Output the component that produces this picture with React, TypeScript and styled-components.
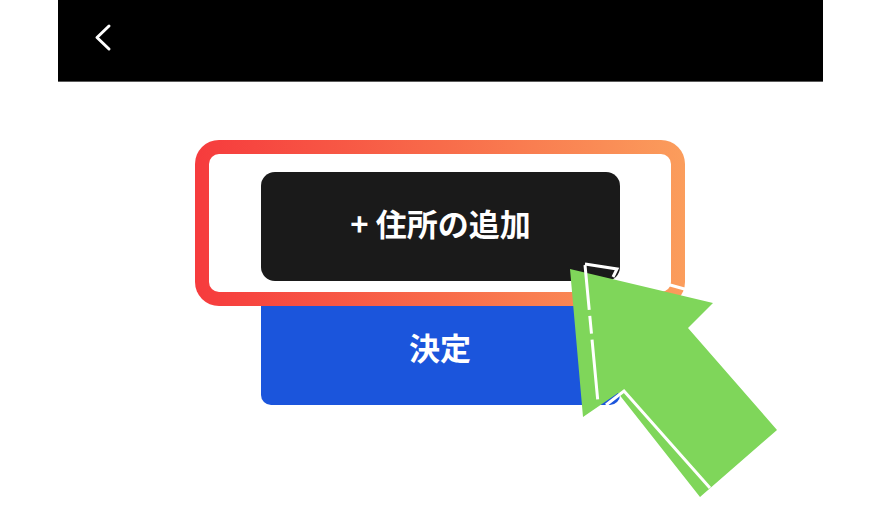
import styled, { createGlobalStyle } from "styled-components";

const GlobalStyle = createGlobalStyle`
  html, body {
    margin: 0;
    padding: 0;
    background: #ffffff;
    font-family: "Noto Sans CJK JP", "Noto Sans", sans-serif;
  }
`;

export default function App() {
  return (
    <Page>
      <GlobalStyle />
      <Screen>
        <Header>
          <BackButton aria-label="back">
            <svg width="20" height="30" viewBox="0 0 20 30">
              <polyline
                points="15,3 3,14.5 15,26"
                fill="none"
                stroke="#ffffff"
                strokeWidth="3"
                strokeLinecap="round"
                strokeLinejoin="round"
              />
            </svg>
          </BackButton>
        </Header>
        <Content>
          <Highlight>
            <ActionButton $tone="dark">+ 住所の追加</ActionButton>
          </Highlight>
          <ActionButton $tone="blue" $under>
            決定
          </ActionButton>
        </Content>
      </Screen>
      <Pointer width="880" height="523" viewBox="0 0 880 523">
        <polygon
          points="570,269 713,303 688,328 777,430 700,497 618,393 583,417"
          fill="#7fd65a"
        />
        <polyline
          points="585,265 598,403"
          fill="none"
          stroke="#ffffff"
          strokeWidth="3"
          strokeDasharray="45 6 18 6 60"
        />
        <polyline
          points="585,264 617,269 613,277"
          fill="none"
          stroke="#ffffff"
          strokeWidth="3"
        />
        <line x1="620" y1="271" x2="688" y2="290" stroke="#ffffff" strokeWidth="3" />
        <polyline
          points="606,405 624,391 710,488"
          fill="none"
          stroke="#ffffff"
          strokeWidth="3"
        />
      </Pointer>
    </Page>
  );
}

const Page = styled.div`
  position: relative;
  width: 880px;
  height: 523px;
  overflow: hidden;
`;

const Screen = styled.div`
  width: 765px;
  margin: 0 auto;
`;

const Header = styled.header`
  display: flex;
  align-items: center;
  height: 81px;
  padding-left: 36px;
  background: #000000;
  border-bottom: 1px solid #5a5a5a;
`;

const BackButton = styled.button`
  display: flex;
  align-items: center;
  padding: 0;
  border: none;
  background: none;
  margin-top: -6px;
`;

const Content = styled.main`
  display: flex;
  flex-direction: column;
  align-items: center;
  padding-top: 58px;
`;

const Highlight = styled.div`
  position: relative;
  z-index: 1;
  display: flex;
  justify-content: center;
  box-sizing: border-box;
  width: 490px;
  height: 166px;
  padding-top: 18px;
  padding-left: 1px;
  border: 14px solid transparent;
  border-radius: 24px;
  background: linear-gradient(#ffffff, #ffffff) padding-box,
    linear-gradient(90deg, #f63b3d 0%, #f86b4a 50%, #fb9d5c 100%) border-box;
`;

const ActionButton = styled.button<{ $tone: "dark" | "blue"; $under?: boolean }>`
  position: relative;
  z-index: 0;
  width: 359px;
  height: 109px;
  margin-top: ${(p) => (p.$under ? "-10px" : "0")};
  border: none;
  border-radius: ${(p) => (p.$tone === "dark" ? "14px" : "10px")};
  background: ${(p) => (p.$tone === "dark" ? "#1a1a1a" : "#1b55dc")};
  color: #ffffff;
  font-family: "Noto Sans CJK JP", "Noto Sans", sans-serif;
  font-size: 31px;
  font-weight: 600;
  padding: 0 0 8px;
`;

const Pointer = styled.svg`
  position: absolute;
  top: 0;
  left: 0;
  pointer-events: none;
  z-index: 5;
`;
